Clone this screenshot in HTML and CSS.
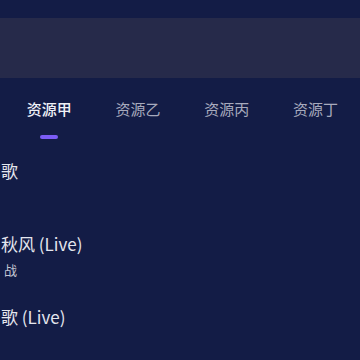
FILE: index.html
```html
<!DOCTYPE html>
<html lang="zh">
<head>
<meta charset="utf-8">
<link rel="stylesheet" href="styles.css">
</head>
<body>
<div class="page">
  <div class="search-band"></div>
  <nav class="tabs">
    <div class="tab active"><span class="label">资源甲</span><span class="indicator"></span></div>
    <div class="tab"><span class="label">资源乙</span></div>
    <div class="tab"><span class="label">资源丙</span></div>
    <div class="tab"><span class="label">资源丁</span></div>
  </nav>
  <ul class="songs">
    <li class="song"><div class="title">歌</div><div class="sub"></div></li>
    <li class="song"><div class="title">秋风 (Live)</div><div class="sub">战</div></li>
    <li class="song"><div class="title">歌 (Live)</div><div class="sub"></div></li>
  </ul>
</div>
</body>
</html>
```
FILE: styles.css
```css
html, body {
  margin: 0;
  padding: 0;
  background: #131c46;
  height: 100%;
  overflow: hidden;
}
.page {
  font-family: "Noto Sans CJK SC", "Noto Sans", sans-serif;
  color: #e6e8f0;
  padding-top: 18px;
}
.search-band {
  height: 60px;
  background: #262a4a;
}
.tabs {
  display: flex;
  padding: 20px 0 0 5px;
  height: 41px;
}
.tab {
  width: 90px;
  display: flex;
  flex-direction: column;
  align-items: center;
}
.label {
  font-size: 15px;
  line-height: 22px;
  color: #a7aabd;
}
.tab.active .label {
  color: #eef0f6;
  font-weight: 500;
}
.indicator {
  margin-top: 15px;
  width: 18px;
  height: 4px;
  border-radius: 2px;
  background: #7b5cf5;
}
.songs {
  list-style: none;
  margin: 8px 0 0 0;
  padding: 0;
}
.song {
  padding: 12px 0 13px 1px;
  height: 48px;
}
.title {
  font-size: 17px;
  line-height: 24px;
  color: #e4e6ee;
}
.sub {
  margin-top: 4px;
  font-size: 13px;
  line-height: 20px;
  color: #c3c6d3;
  height: 20px;
  padding-left: 3px;
}
```
